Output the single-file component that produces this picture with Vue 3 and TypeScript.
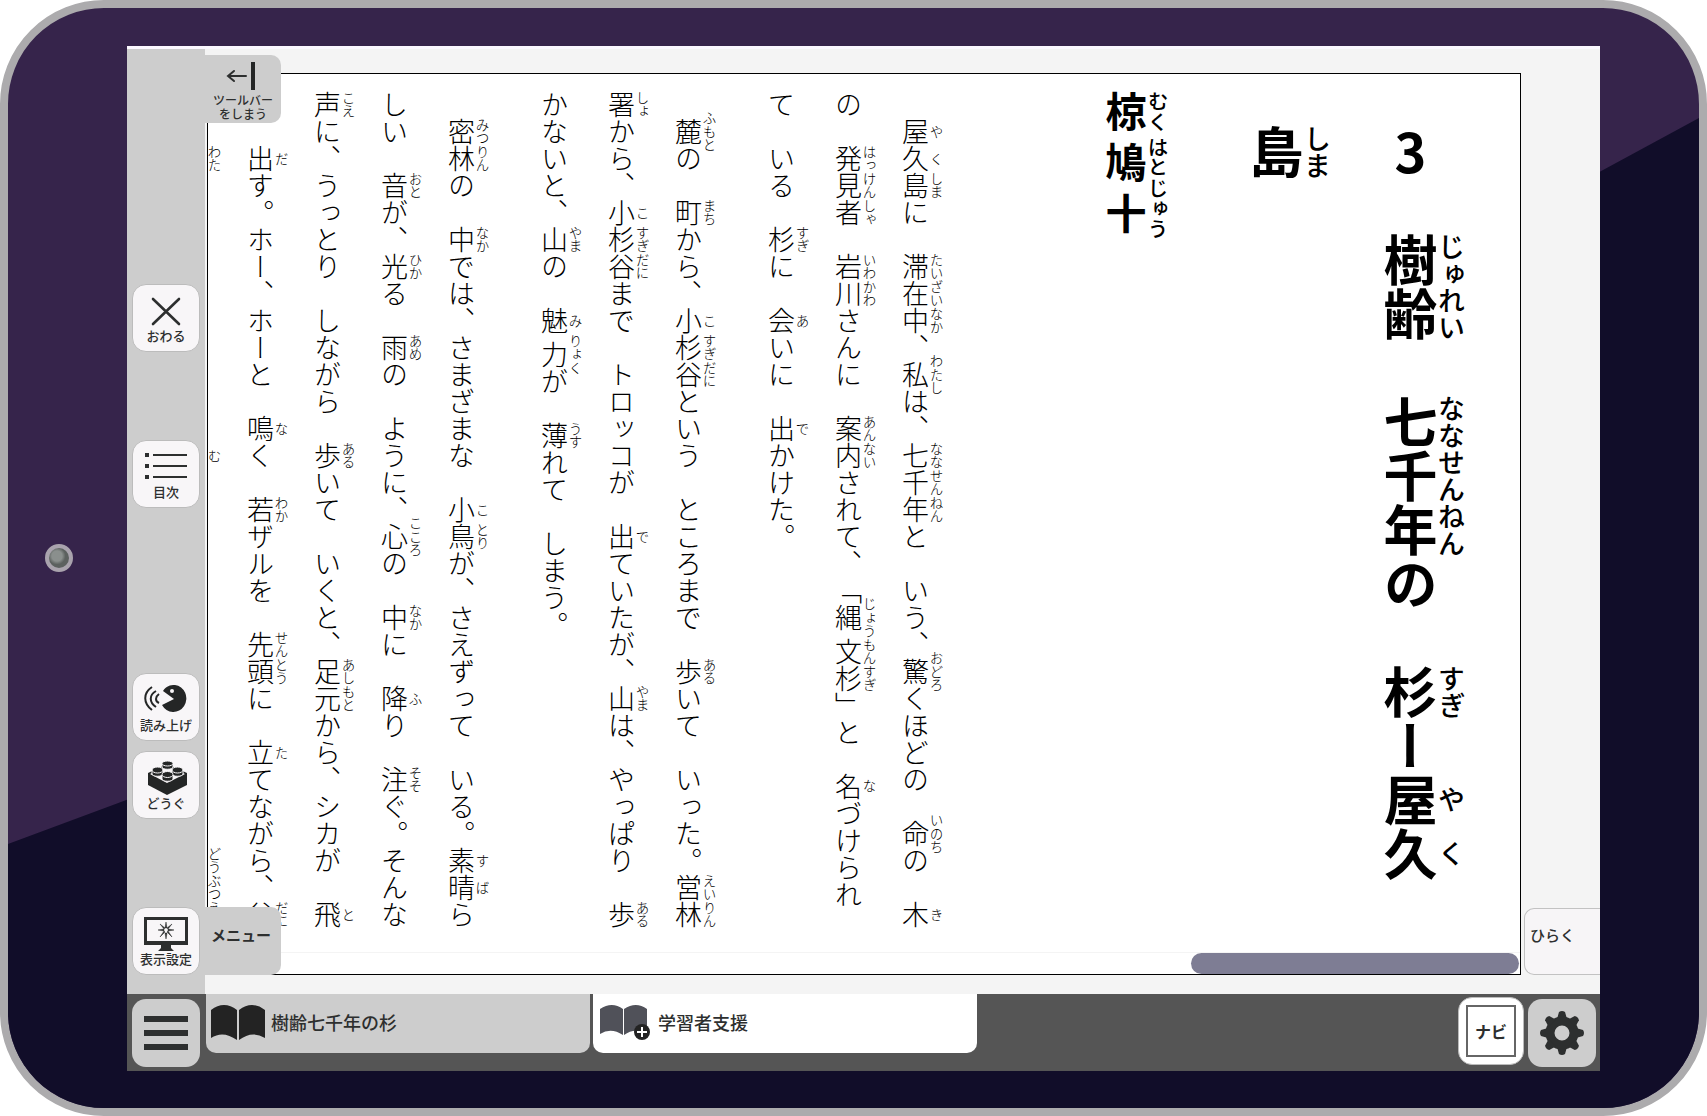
<script setup lang="ts">
import { ref } from 'vue'

interface Segment {
  base: string
  ruby?: string
}

// 漢字《よみ》 notation is split into plain runs and ruby pairs.
function parse(line: string): Segment[] {
  const out: Segment[] = []
  const pattern = /([\u4e00-\u9fff]+)《([^》]+)》/g
  let last = 0
  for (const m of line.matchAll(pattern)) {
    const at = m.index ?? 0
    if (at > last) out.push({ base: line.slice(last, at) })
    out.push({ base: m[1], ruby: m[2] })
    last = at + m[0].length
  }
  if (last < line.length) out.push({ base: line.slice(last) })
  return out
}

const title = [
  '3　樹《じゅ》齢《れい》　七《なな》千《せん》年《ねん》の　杉《すぎ》ー屋《や》久《く》',
  '島《しま》',
].map(parse)

const author = parse('椋《むく》 鳩十《はとじゅう》')

const paragraphs = [
  [
    '　屋《や》久《く》島《しま》に　滞《たい》在《ざい》中《なか》、私《わたし》は、七《なな》千《せん》年《ねん》と　いう、驚《おどろ》くほどの　命《いのち》の　木《き》',
    'の　発見《はっけん》者《しゃ》　岩《いわ》川《かわ》さんに　案《あん》内《ない》されて、「縄《じょう》文《もん》杉《すぎ》」と　名《な》づけられ',
    'て　いる　杉《すぎ》に　会《あ》いに　出《で》かけた。',
  ],
  [
    '　麓《ふもと》の　町《まち》から、小《こ》杉《すぎ》谷《だに》という　ところまで　歩《ある》いて　いった。営《えい》林《りん》',
    '署《しょ》から、小《こ》杉《すぎ》谷《だに》まで　トロッコが　出《で》ていたが、山《やま》は、やっぱり　歩《ある》',
    'かないと、山《やま》の　魅《み》力《りょく》が　薄《うす》れて　しまう。',
  ],
  [
    '　密《みつ》林《りん》の　中《なか》では、さまざまな　小《こ》鳥《とり》が、さえずって　いる。素《す》晴《ば》ら',
    'しい　音《おと》が、光《ひか》る　雨《あめ》の　ように、心《こころ》の　中《なか》に　降《ふ》り　注《そそ》ぐ。そんな',
    '声《こえ》に、うっとり　しながら　歩《ある》いて　いくと、足《あし》元《もと》から、シカが　飛《と》',
    'び　出《だ》す。ホー、ホーと　鳴《な》く　若《わか》ザルを　先《せん》頭《とう》に　立《た》てながら、谷《だに》',
    'を　渡《わた》って　いく、サルの　群《む》れは、この　もりに　すまう　動《どう》物《ぶつ》園《えん》',
  ],
].map((p) => p.map(parse))

const tabs = [
  { id: 'book', label: '樹齢七千年の杉' },
  { id: 'support', label: '学習者支援' },
]
const current = ref('support')
</script>

<template>
  <div class="tablet">
    <span class="camera"></span>
    <div class="screen">
      <div class="workspace">
        <nav class="sidebar" aria-label="ツールバー">
          <button class="tool" type="button">
            <svg width="44" height="34" viewBox="0 0 44 34"><path d="M9 5 35 30M35 5 9 30" stroke="#2d2f2f" stroke-width="2.6" stroke-linecap="round" /></svg>
            <span>おわる</span>
          </button>
          <button class="tool toc" type="button">
            <svg width="44" height="34" viewBox="0 0 44 34"><path d="M9 5H43M9 16H43M9 27H43" stroke="#2d2f2f" stroke-width="2" /><path d="M1 3h4v4H1zM1 14h4v4H1zM1 25h4v4H1z" fill="#2d2f2f" /></svg>
            <span>目次</span>
          </button>
          <button class="tool speech" type="button">
            <svg width="44" height="34" viewBox="0 0 44 34">
              <path d="M19 8C22 3 26 2 31 2A13 13.500 0 1 1 18 22L30 16Z" fill="#242626" />
              <circle cx="28" cy="8" r="2" fill="#f8f6f8" />
              <path d="M8 4C-1 10 -1 20 8 27M12 8C5 12 5 19 12 24M15 11C11 14 11 18 15 20" fill="none" stroke="#242626" stroke-width="2" />
            </svg>
            <span>読み上げ</span>
          </button>
          <button class="tool blocks" type="button">
            <svg width="44" height="34" viewBox="0 0 44 34">
              <path d="M4 12 23 3 43 12V24L23 34 4 24Z" fill="#242626" />
              <path d="M6 13 23 5 41 13 23 22Z" fill="#f8f6f8" />
              <g fill="#242626" stroke="#f8f6f8" stroke-width="1">
                <path d="M18 2v4c0 3 11 3 11 0V2z" /><ellipse cx="23.500" cy="2.500" rx="5.500" ry="2.500" />
                <path d="M8 9v4c0 3 11 3 11 0V9z" /><ellipse cx="13.500" cy="9" rx="5.500" ry="3" />
                <path d="M28 9v4c0 3 11 3 11 0V9z" /><ellipse cx="33.500" cy="9" rx="5.500" ry="3" />
                <path d="M18 14v4c0 3 11 3 11 0v-4z" /><ellipse cx="23.500" cy="13.500" rx="5.500" ry="3" />
              </g>
            </svg>
            <span>どうぐ</span>
          </button>
          <button class="tool display" type="button">
            <svg width="44" height="34" viewBox="0 0 44 34">
              <rect x="1.500" y="1.500" width="41" height="25" fill="none" stroke="#2d2f2f" stroke-width="3" />
              <path d="M0 24h44v4H0zM17 28h10v3l3 3H14l3-3z" fill="#2d2f2f" />
              <path d="M22 5 23 11 21 11ZM22 22 23 16 21 16ZM14 13 20 12 20 14ZM30 13 24 12 24 14ZM16 7 21 11 20 12ZM28 7 23 11 24 12ZM16 20 21 15 20 14ZM28 20 23 15 24 14Z" fill="#2d2f2f" stroke="#2d2f2f" stroke-width=".5" />
            </svg>
            <span>表示設定</span>
          </button>
        </nav>

        <main class="stage">
          <section class="reader">
            <article class="text">
              <h1>
                <span v-for="(line, i) in title" :key="i" class="line">
                  <template v-for="(s, j) in line" :key="j"><ruby v-if="s.ruby">{{ s.base }}<rt>{{ s.ruby }}</rt></ruby><template v-else>{{ s.base }}</template></template>
                </span>
              </h1>
              <h2><template v-for="(s, j) in author" :key="j"><ruby v-if="s.ruby">{{ s.base }}<rt>{{ s.ruby }}</rt></ruby><template v-else>{{ s.base }}</template></template></h2>
              <p v-for="(p, k) in paragraphs" :key="k">
                <span v-for="(line, i) in p" :key="i" class="line">
                  <template v-for="(s, j) in line" :key="j"><ruby v-if="s.ruby">{{ s.base }}<rt>{{ s.ruby }}</rt></ruby><template v-else>{{ s.base }}</template></template>
                </span>
              </p>
            </article>
            <div class="scroll"><div class="thumb"></div></div>
          </section>
          <button class="open" type="button">ひらく</button>
          <button class="flap collapse" type="button">
            <svg width="40" height="30" viewBox="0 0 40 30"><path d="M5 15H23M11 10 5 15 11 20" fill="none" stroke="#2d2f2f" stroke-width="2" stroke-linecap="round" /><path d="M28 1h4v28h-4z" fill="#242626" /></svg>
            <span>ツールバー<br />をしまう</span>
          </button>
          <button class="flap menu" type="button">メニュー</button>
        </main>
      </div>

      <footer class="bar">
        <button class="key" type="button" aria-label="メニューを開く">
          <svg width="44" height="34" viewBox="0 0 44 34"><path d="M0 0h44v6H0zM0 14h44v6H0zM0 28h44v6H0z" fill="#2d2f2f" /></svg>
        </button>
        <div class="tabs">
          <button v-for="t in tabs" :key="t.id" class="tab" :class="{ active: current === t.id }" type="button" @click="current = t.id">
            <svg v-if="t.id === 'book'" width="56" height="36" viewBox="0 0 56 36">
              <path d="M1 6Q14-4 27 6V36Q13 26 1 34ZM29 6Q42-4 55 6V34Q42 26 29 36Z" fill="#232323" />
            </svg>
            <svg v-else width="56" height="36" viewBox="0 0 56 36">
              <path d="M3 5Q15-3 26 5V31Q14 23 3 30ZM27 5Q39-3 50 5V30Q38 23 27 31Z" fill="#505159" />
              <circle cx="45" cy="28" r="8" fill="#232323" /><path d="M45 23v10M40 28h10" stroke="#fff" stroke-width="2" />
            </svg>
            <span>{{ t.label }}</span>
          </button>
        </div>
        <button class="key navi" type="button"><span>ナビ</span></button>
        <button class="key" type="button" aria-label="設定">
          <svg width="44" height="44" viewBox="-22 -22 44 44">
            <circle r="12" fill="none" stroke="#2d2f2f" stroke-width="9" />
            <path v-for="n in 8" :key="n" d="M-5-14-3-21Q0-23 3-21L5-14Z" :transform="`rotate(${n * 45})`" fill="#2d2f2f" />
          </svg>
        </button>
      </footer>
    </div>
  </div>
</template>

<style>
body {
  margin: 0;
  background: #fff;
}
</style>

<style scoped>
* {
  box-sizing: border-box;
}

button {
  padding: 0;
  border: 0;
  font-family: inherit;
  color: #2d2f2f;
  cursor: pointer;
}

.tablet {
  position: relative;
  display: flex;
  min-height: 100vh;
  padding: 38px 99px 37px 119px;
  border: 8px solid #acabad;
  border-radius: 104px;
  background: #36244b;
  overflow: hidden;
  font-family: "Noto Sans CJK JP", sans-serif;
}

.tablet::before {
  content: "";
  position: absolute;
  inset: 0;
  background: #110d29;
  clip-path: polygon(0 76%, 7% 72%, 94% 15%, 100% 10%, 100% 100%, 0 100%);
}

.camera {
  position: absolute;
  top: 50%;
  left: 37px;
  width: 28px;
  height: 28px;
  margin-top: -14px;
  border: 4px solid #a9a3ad;
  border-radius: 50%;
  background: radial-gradient(circle at 40% 40%, #8a8f8d 0 30%, #5c615f 50%);
}

.screen {
  position: relative;
  flex: 1;
  min-width: 0;
  display: flex;
  flex-direction: column;
  border-top: 3px solid #fbf8ff;
  background: #f4f4f4;
}

.workspace {
  flex: 1;
  display: flex;
}

.sidebar {
  flex: none;
  width: 78px;
  display: flex;
  flex-direction: column;
  align-items: center;
  justify-content: flex-end;
  gap: 10px;
  padding-bottom: 19px;
  background: #cdcdcd;
}

.tool {
  width: 68px;
  height: 68px;
  display: flex;
  flex-direction: column;
  align-items: center;
  justify-content: flex-end;
  padding-bottom: 7px;
  border: 1px solid #bcbcbc;
  border-radius: 14px;
  background: #f8f6f8;
  font-size: 13px;
  font-weight: 500;
  line-height: 16px;
  white-space: nowrap;
}

.toc {
  margin-top: 78px;
}

.speech {
  margin-top: 155px;
}

.display {
  margin-top: 78px;
}

.stage {
  position: relative;
  flex: 1;
  min-width: 0;
  display: flex;
  align-items: stretch;
  gap: 3px;
  padding: 24px 0 19px 2px;
}

.reader {
  flex: 1;
  min-width: 0;
  display: flex;
  flex-direction: column;
  border: 1px solid #000;
  background: #fff;
  overflow: hidden;
}

.text {
  flex: 1;
  padding: 17px 43px 25px 0;
  writing-mode: vertical-rl;
  overflow: hidden;
  font-size: 27px;
  font-weight: 300;
  line-height: 67px;
  color: #000;
  white-space: nowrap;
  text-spacing-trim: space-all;
}

.line {
  display: block;
}

.text rt {
  font-size: 50%;
  line-height: 1;
}

h1 {
  margin: 0;
  padding-top: 34px;
  font-size: 54px;
  font-weight: 700;
  line-height: 134px;
  text-orientation: upright;
}

h2 {
  margin: 0 33px 0 127px;
  font-size: 41px;
  font-weight: 700;
  line-height: 100px;
}

h1 rt,
h2 rt {
  font-weight: 500;
}

p {
  margin: 0 0 0 26px;
}

.scroll {
  flex: none;
  height: 22px;
  border-top: 1px solid #f4f4f4;
  padding-right: 1px;
}

.thumb {
  width: 25%;
  height: 21px;
  margin-left: auto;
  border-radius: 11px;
  background: #7e7d94;
}

.open {
  flex: none;
  align-self: flex-end;
  width: 76px;
  height: 67px;
  padding: 0 0 14px 5px;
  border: 1px solid #c2c2c2;
  border-right: 0;
  border-radius: 10px 0 0 10px;
  background: #f7f5f7;
  font-size: 15px;
  font-weight: 500;
  text-align: left;
}

.flap {
  position: absolute;
  left: 0;
  width: 76px;
  border-radius: 0 10px 10px 0;
  background: #cdcdcd;
}

.collapse {
  top: 6px;
  height: 68px;
  display: flex;
  flex-direction: column;
  align-items: center;
  justify-content: flex-end;
  gap: 2px;
  padding-bottom: 2px;
  font-size: 12px;
  font-weight: 500;
  line-height: 14px;
}

.menu {
  bottom: 19px;
  height: 68px;
  padding: 0 0 14px 6px;
  font-size: 15px;
  font-weight: 700;
  text-align: left;
}

.bar {
  flex: none;
  display: flex;
  align-items: flex-start;
  gap: 6px;
  height: 77px;
  padding: 0 4px 0 5px;
  background: #555;
}

.key {
  flex: none;
  width: 68px;
  height: 68px;
  margin-top: 5px;
  display: flex;
  align-items: center;
  justify-content: center;
  border-radius: 14px;
  background: #cdcdcd;
}

.navi {
  width: 66px;
  margin: 3px -2px 0 0;
  padding: 7px;
  border: 1px solid #bbb;
  background: #fff;
  font-size: 16px;
  font-weight: 700;
}

.navi span {
  flex: 1;
  align-self: stretch;
  display: flex;
  align-items: center;
  justify-content: center;
  border: 2px solid #666;
}

.tabs {
  flex: 1;
  display: flex;
  gap: 3px;
}

.tab {
  flex: 0 1 384px;
  height: 59px;
  display: flex;
  align-items: center;
  gap: 5px;
  padding: 0 4px 4px;
  border-radius: 0 0 10px 10px;
  background: #cdcdcd;
  font-size: 18px;
  font-weight: 500;
  white-space: nowrap;
}

.tab.active {
  background: #fff;
}
</style>
